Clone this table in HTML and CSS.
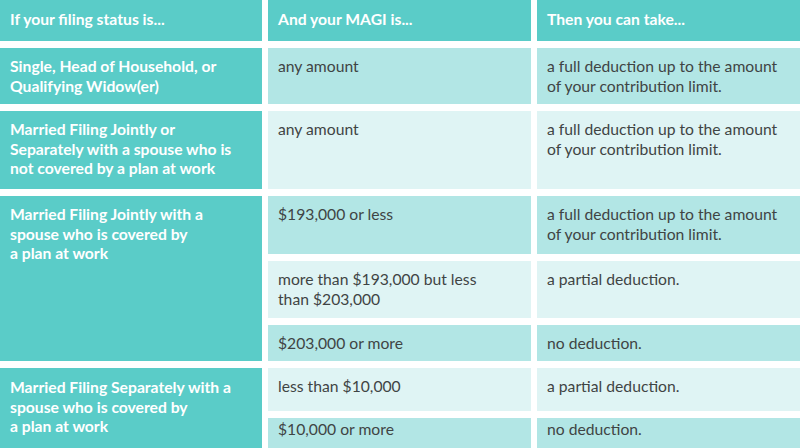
FILE: index.html
```html
<!DOCTYPE html>
<html lang="en">
<head>
<meta charset="utf-8">
<title>IRA deduction table</title>
<link rel="stylesheet" href="styles.css">
</head>
<body>
<div class="table">
  <div class="cell head">If your filing status is...</div>
  <div class="cell head">And your MAGI is...</div>
  <div class="cell head">Then you can take...</div>

  <div class="cell status">Single, Head of Household, or<br>Qualifying Widow(er)</div>
  <div class="cell tone-a">any amount</div>
  <div class="cell tone-a">a full deduction up to the amount<br>of your contribution limit.</div>

  <div class="cell status">Married Filing Jointly or<br>Separately with a spouse who is<br>not covered by a plan at work</div>
  <div class="cell tone-b">any amount</div>
  <div class="cell tone-b">a full deduction up to the amount<br>of your contribution limit.</div>

  <div class="cell status span-3">Married Filing Jointly with a<br>spouse who is covered by<br>a plan at work</div>
  <div class="cell tone-a">$193,000 or less</div>
  <div class="cell tone-a">a full deduction up to the amount<br>of your contribution limit.</div>
  <div class="cell tone-b">more than $193,000 but less<br>than $203,000</div>
  <div class="cell tone-b">a partial deduction.</div>
  <div class="cell tone-a">$203,000 or more</div>
  <div class="cell tone-a">no deduction.</div>

  <div class="cell status span-2 centered">Married Filing Separately with a<br>spouse who is covered by<br>a plan at work</div>
  <div class="cell tone-b">less than $10,000</div>
  <div class="cell tone-b">a partial deduction.</div>
  <div class="cell tone-a last">$10,000 or more</div>
  <div class="cell tone-a last">no deduction.</div>
</div>
</body>
</html>
```

FILE: styles.css
```css
html, body {
  margin: 0;
  padding: 0;
  background: #ffffff;
}
body {
  width: 800px;
  height: 448px;
  overflow: hidden;
  font-family: "Lato", "Open Sans", "Liberation Sans", sans-serif;
  font-size: 15.7px;
  line-height: 19.5px;
}
.table {
  display: grid;
  grid-template-columns: 262px 263px 263px;
  grid-template-rows: 41px 56px 78px 58px 57px 36px 43px 40px;
  column-gap: 6px;
  row-gap: 7px;
}
.cell {
  padding: 9px 10px 0 10px;
  box-sizing: border-box;
}
.head {
  background: #5accc8;
  color: #ffffff;
  font-weight: 700;
  padding-top: 10px;
}
.status {
  background: #5accc8;
  color: #ffffff;
  font-weight: 700;
}
.span-3 {
  grid-row: span 3;
}
.span-2 {
  grid-row: span 2;
}
.centered {
  padding-top: 10px;
}
.tone-a {
  background: #b2e6e5;
  color: #3f4444;
}
.tone-b {
  background: #dff4f4;
  color: #3f4444;
}
.last {
  padding-top: 2px;
}
```
